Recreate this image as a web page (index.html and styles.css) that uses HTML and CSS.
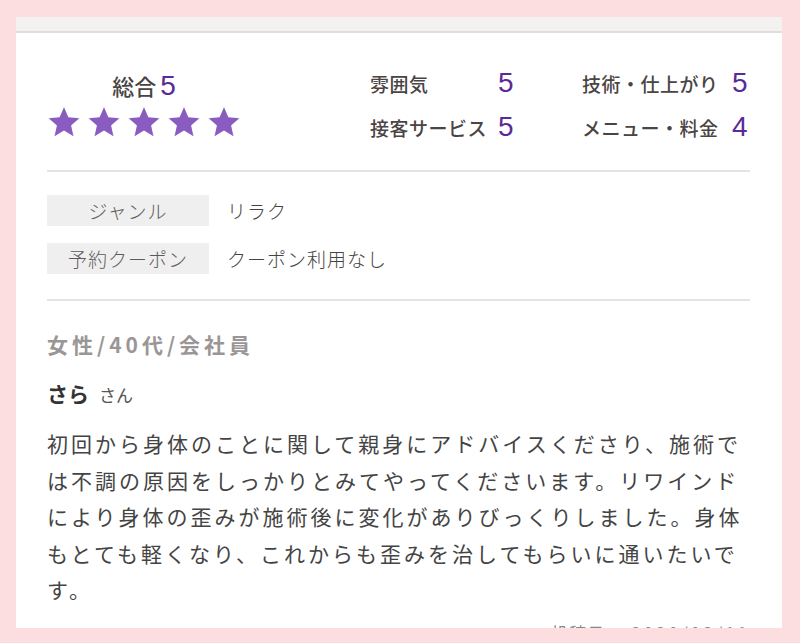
FILE: index.html
```html
<!DOCTYPE html>
<html lang="ja">
<head>
<meta charset="utf-8">
<link rel="stylesheet" href="styles.css">
</head>
<body>
<div class="card">
  <div class="card-top"></div>
  <section class="ratings">
    <div class="overall">
      <div class="overall-line"><span class="overall-label">総合</span><span class="overall-num">5</span></div>
      <div class="stars">
        <svg class="star" viewBox="0 0 24 22"><polygon points="12,0.5 15.1,7.6 22.8,8.3 17,13.4 18.7,21 12,17 5.3,21 7,13.4 1.2,8.3 8.9,7.6"/></svg>
        <svg class="star" viewBox="0 0 24 22"><polygon points="12,0.5 15.1,7.6 22.8,8.3 17,13.4 18.7,21 12,17 5.3,21 7,13.4 1.2,8.3 8.9,7.6"/></svg>
        <svg class="star" viewBox="0 0 24 22"><polygon points="12,0.5 15.1,7.6 22.8,8.3 17,13.4 18.7,21 12,17 5.3,21 7,13.4 1.2,8.3 8.9,7.6"/></svg>
        <svg class="star" viewBox="0 0 24 22"><polygon points="12,0.5 15.1,7.6 22.8,8.3 17,13.4 18.7,21 12,17 5.3,21 7,13.4 1.2,8.3 8.9,7.6"/></svg>
        <svg class="star" viewBox="0 0 24 22"><polygon points="12,0.5 15.1,7.6 22.8,8.3 17,13.4 18.7,21 12,17 5.3,21 7,13.4 1.2,8.3 8.9,7.6"/></svg>
      </div>
    </div>
    <div class="details">
      <span class="d-label">雰囲気</span><span class="d-num">5</span>
      <span class="d-label">技術・仕上がり</span><span class="d-num">5</span>
      <span class="d-label">接客サービス</span><span class="d-num">5</span>
      <span class="d-label">メニュー・料金</span><span class="d-num">4</span>
    </div>
  </section>
  <section class="info">
    <div class="info-row"><span class="info-label">ジャンル</span><span class="info-value">リラク</span></div>
    <div class="info-row"><span class="info-label">予約クーポン</span><span class="info-value">クーポン利用なし</span></div>
  </section>
  <section class="review">
    <div class="reviewer">女性/40代/会社員</div>
    <div class="name"><span class="name-main">さら</span><span class="name-suffix">さん</span></div>
    <p class="body-text">初回から身体のことに関して親身にアドバイスくださり、施術では不調の原因をしっかりとみてやってくださいます。リワインドにより身体の歪みが施術後に変化がありびっくりしました。身体もとても軽くなり、これからも歪みを治してもらいに通いたいです。</p>
    <div class="posted"><span class="posted-label">投稿日</span><span class="posted-date">2020/03/11</span></div>
  </section>
</div>
</body>
</html>
```
FILE: styles.css
```css
html, body {
  margin: 0;
  padding: 0;
}
body {
  background: #fcdde0;
  font-family: "Noto Sans CJK JP", "Noto Sans", sans-serif;
  color: #444;
  height: 643px;
  overflow: hidden;
}
.card {
  margin: 17px 18px 0 16px;
  width: 766px;
  height: 611px;
  background: #fff;
  overflow: hidden;
  box-sizing: border-box;
}
.card-top {
  height: 14px;
  background: #f3f2f1;
  border-bottom: 2px solid #dedede;
}
.ratings {
  margin: 0 32px 0 31px;
  padding: 35px 0 28px;
  display: flex;
  align-items: flex-start;
}
.overall {
  width: 194px;
  padding-top: 2px;
  display: flex;
  flex-direction: column;
  align-items: center;
}
.overall-line {
  height: 30px;
  line-height: 30px;
  display: flex;
  align-items: baseline;
  gap: 4px;
}
.overall-label {
  font-size: 22px;
  font-weight: 500;
  color: #4a4444;
}
.overall-num {
  font-family: "Liberation Sans", Arial, sans-serif;
  font-size: 28px;
  color: #5a2a98;
}
.stars {
  margin-top: 6px;
  display: flex;
  gap: 6px;
}
.star {
  width: 34px;
  height: 32px;
  fill: #8a5cc0;
  display: block;
}
.details {
  margin-left: 129px;
  display: grid;
  grid-template-columns: 128px 84px 150px auto;
  grid-auto-rows: 30px;
  row-gap: 14px;
  align-items: center;
}
.d-label {
  font-size: 19px;
  font-weight: 500;
  letter-spacing: 0.5px;
  color: #4a4444;
  white-space: nowrap;
}
.d-num {
  font-family: "Liberation Sans", Arial, sans-serif;
  font-size: 28px;
  color: #5a2a98;
  line-height: 30px;
}
.info {
  margin: 0 32px 0 31px;
  border-top: 2px solid #e4e4e4;
  padding: 23px 0 25px;
  display: flex;
  flex-direction: column;
  gap: 17px;
}
.info-row {
  display: flex;
  align-items: center;
}
.info-label {
  width: 162px;
  height: 31px;
  line-height: 31px;
  background: #efefef;
  text-align: center;
  font-size: 19px;
  font-weight: 300;
  letter-spacing: 1px;
  color: #5f5a5a;
}
.info-value {
  margin-left: 18px;
  font-size: 19px;
  font-weight: 300;
  letter-spacing: 1px;
  color: #444;
}
.review {
  margin: 0 32px 0 31px;
  border-top: 2px solid #e4e4e4;
  padding-top: 28px;
}
.reviewer {
  height: 30px;
  line-height: 30px;
  font-size: 21px;
  font-weight: 700;
  letter-spacing: 4px;
  color: #9a9696;
}
.name {
  margin-top: 19px;
  height: 30px;
  line-height: 30px;
  display: flex;
  align-items: baseline;
  gap: 10px;
}
.name-main {
  font-size: 21px;
  font-weight: 700;
  color: #333;
}
.name-suffix {
  font-size: 17px;
  color: #555;
}
.body-text {
  margin: 17px 0 0;
  font-size: 21px;
  letter-spacing: 3px;
  line-height: 36.5px;
  color: #444;
}
.posted {
  margin-top: 15px;
  text-align: right;
  font-size: 17px;
  line-height: 20px;
  color: #888;
  letter-spacing: 1px;
}
.posted-label {
  margin-right: 26px;
}
.posted-date {
  letter-spacing: 3px;
}
```
